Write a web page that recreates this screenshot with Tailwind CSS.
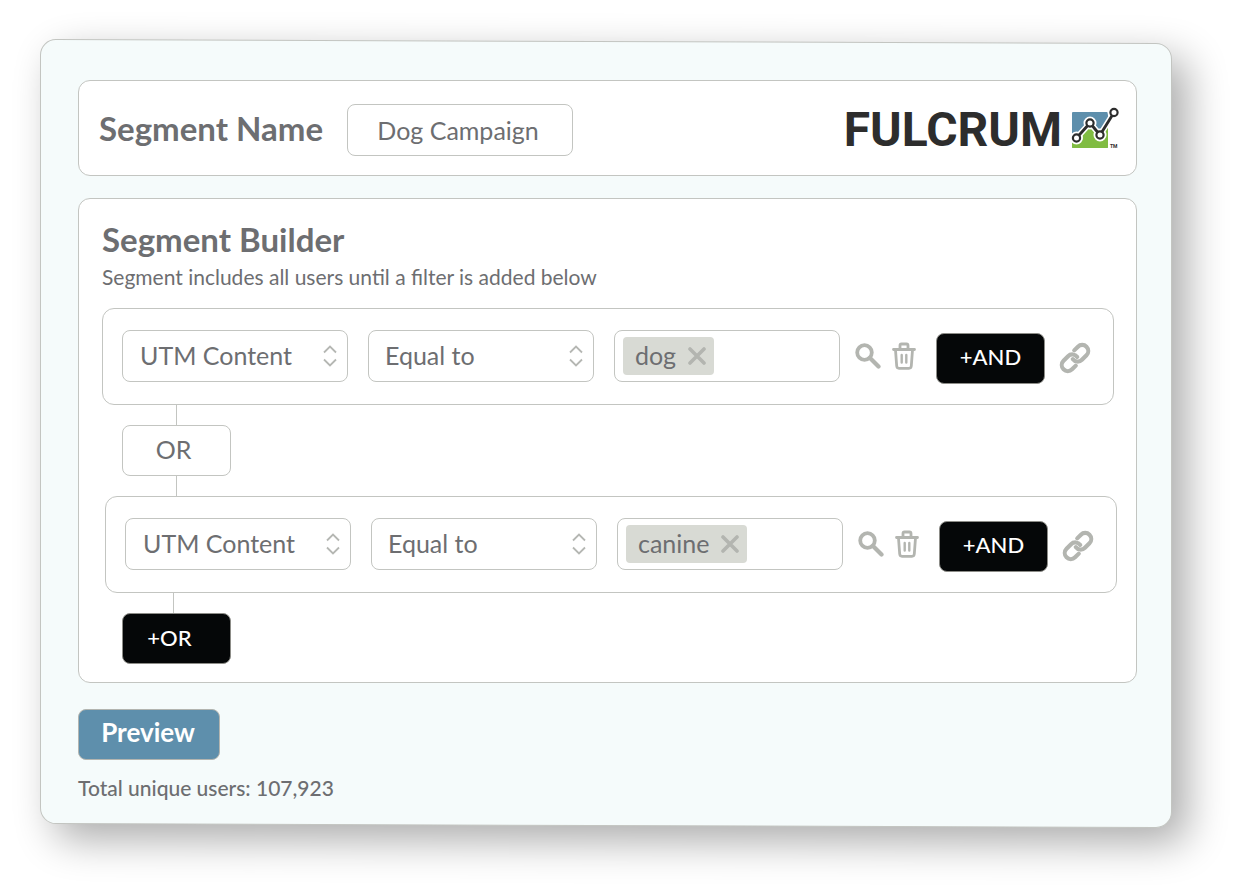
<!DOCTYPE html>
<html lang="en">
<head>
<meta charset="utf-8">
<meta name="viewport" content="width=device-width, initial-scale=1">
<title>Segment Builder</title>
<script src="https://cdn.jsdelivr.net/npm/@tailwindcss/browser@4"></script>
</head>
<body class="flow-root min-h-screen bg-white font-['Lato',sans-serif] text-[#6d6e71]">
<svg class="hidden" aria-hidden="true">
  <symbol id="updown" viewBox="0 0 14 22"><path d="M1 7.500 7 1.500l6 6M1 14.500l6 6 6-6" fill="none" stroke="#b5b7b3" stroke-width="1.800"/></symbol>
  <symbol id="search" viewBox="0 0 26 26"><circle cx="9.500" cy="9.500" r="7.300" fill="none" stroke="#b3b5b0" stroke-width="3.800"/><path d="M15 15l8.500 8.500" stroke="#b3b5b0" stroke-width="4.200" stroke-linecap="round"/></symbol>
  <symbol id="trash" viewBox="0 0 24 28"><g fill="none" stroke="#b3b5b0" stroke-linecap="round" stroke-linejoin="round"><path d="M1.500 7.500h21M8 7V3.500q0-1.500 1.500-1.500h5q1.500 0 1.500 1.500V7" stroke-width="2.800"/><path d="M3.500 8l1.200 16q.2 2.300 2.300 2.300h10q2.100 0 2.300-2.300L20.500 8" stroke-width="2.800"/><path d="M9.700 13v7.500M14.300 13v7.500" stroke-width="2.400"/></g></symbol>
  <symbol id="link" viewBox="0 0 24 24"><g fill="none" stroke="#b3b5b0" stroke-width="3.100" stroke-linecap="round" stroke-linejoin="round"><path d="M10.300 12.800a4.500 4.500 0 0 0 6.900.5l3.400-3.400a4.500 4.500 0 0 0-6.400-6.400L11.400 6.300"/><path d="M13.700 11.200a4.500 4.500 0 0 0-6.900-.5l-3.400 3.400a4.500 4.500 0 0 0 6.400 6.400l2.800-2.800"/></g></symbol>
  <symbol id="cross" viewBox="0 0 18 18"><path d="M2 2l14 14M16 2L2 16" stroke="#b3b5b0" stroke-width="3.600" stroke-linecap="round"/></symbol>
</svg>

<main class="relative mt-[41px] mr-[66px] ml-10 pt-[39px] pr-[35px] pb-[22px] pl-[38px]">
  <div class="absolute inset-0 -z-10 skew-y-[0.2deg] rounded-2xl border border-[#c3c5c1] bg-[#f5fbfb] shadow-[15px_15px_40px_rgba(0,0,0,0.33)]"></div>

  <header class="flex h-24 items-center rounded-xl border border-[#c3c5c1] bg-white pt-1 pr-[17px] pl-5">
    <label for="segment-name" class="pb-1 text-[33px] leading-10 font-bold">Segment Name</label>
    <input id="segment-name" value="Dog Campaign" class="ml-6 h-[52px] w-[226px] rounded-lg border border-[#c3c5c1] bg-white pr-1 text-center text-[25px]">
    <div class="ml-auto flex items-center gap-[9px]" aria-label="Fulcrum">
      <span class="font-['Roboto',sans-serif] text-5xl font-bold text-[#2d2d2d]">FULCRUM</span>
      <svg class="mb-0.5 h-[44px] w-[48px]" viewBox="0 0 48 44">
        <rect x="1" y="5" width="36" height="36" rx="1" fill="#5e8fac"/>
        <path d="M1 31.500L19 17l10 11 8-11v23a1 1 0 0 1-1 1H2a1 1 0 0 1-1-1z" fill="#80bc42"/>
        <g stroke="#fff" stroke-width="6" fill="none"><path d="M5.500 31L19 16l10 12L43 5.500"/><circle cx="5.500" cy="31" r="3.500"/><circle cx="19" cy="16" r="3.500"/><circle cx="29" cy="28" r="3.500"/><circle cx="43" cy="5.500" r="3.500"/></g>
        <g stroke="#2d2d2d" stroke-width="2.200" fill="#fff"><path d="M5.500 31L19 16l10 12L43 5.500" fill="none" stroke-width="2.800"/><circle cx="5.500" cy="31" r="3.600"/><circle cx="19" cy="16" r="3.600"/><circle cx="29" cy="28" r="3.600"/><circle cx="43" cy="5.500" r="3.600"/></g>
        <text x="39" y="41" font-family="Roboto, sans-serif" font-size="5" font-weight="700" fill="#2d2d2d">TM</text>
      </svg>
    </div>
  </header>

  <section class="mt-[22px] rounded-xl border border-[#c3c5c1] bg-white pt-5 pr-[19px] pb-[18px] pl-[23px]">
    <h1 class="text-[33px] leading-10 font-bold">Segment Builder</h1>
    <p class="mt-0.5 text-[21px] leading-8">Segment includes all users until a filter is added below</p>

    <div class="mt-[15px] mr-[3px] flex h-[97px] items-center rounded-xl border border-[#c3c5c1] bg-white pr-[22px] pb-0.5 pl-[19px]">
      <div class="grid flex-1 grid-cols-3 gap-5">
        <div class="relative">
          <select aria-label="Field, first filter" class="h-[52px] w-full appearance-none rounded-lg border border-[#c3c5c1] bg-white pl-[17px] text-[25px]"><option>UTM Content</option></select>
          <svg class="pointer-events-none absolute top-[15px] right-[11px] h-[22px] w-[14px]"><use href="#updown"/></svg>
        </div>
        <div class="relative">
          <select aria-label="Operator, first filter" class="h-[52px] w-full appearance-none rounded-lg border border-[#c3c5c1] bg-white pl-4 text-[25px]"><option>Equal to</option></select>
          <svg class="pointer-events-none absolute top-[15px] right-[11px] h-[22px] w-[14px]"><use href="#updown"/></svg>
        </div>
        <div class="flex h-[52px] items-center rounded-lg border border-[#c3c5c1] bg-white px-2">
          <span class="flex h-[38px] items-center gap-3 rounded bg-[#d8dad4] pr-2 pl-3 text-[25px]">dog<button aria-label="Remove dog"><svg class="h-[18px] w-[18px]"><use href="#cross"/></svg></button></span>
          <input aria-label="Values, first filter" class="w-0 min-w-0 flex-1 text-[25px]">
        </div>
      </div>
      <button aria-label="Search" class="ml-[15px]"><svg class="h-[26px] w-[26px]"><use href="#search"/></svg></button>
      <button aria-label="Delete" class="ml-[11px]"><svg class="h-7 w-6"><use href="#trash"/></svg></button>
      <button class="mt-[6px] ml-5 h-[51px] w-[109px] rounded-lg border border-[#8d8d88] bg-[#050708] pb-1 text-[22px] font-medium text-white">+AND</button>
      <button aria-label="Link" class="mt-1 ml-[14px]"><svg class="h-8 w-8"><use href="#link"/></svg></button>
    </div>

    <div class="ml-[74px] h-5 w-px bg-[#c3c5c1]"></div>
    <button class="ml-5 block h-[51px] w-[109px] rounded-lg border border-[#c3c5c1] bg-white pr-[6px] pb-[2px] text-[25px]">OR</button>
    <div class="ml-[74px] h-5 w-px bg-[#c3c5c1]"></div>

    <div class="ml-[3px] flex h-[97px] items-center rounded-xl border border-[#c3c5c1] bg-white pr-[22px] pb-0.5 pl-[19px]">
      <div class="grid flex-1 grid-cols-3 gap-5">
        <div class="relative">
          <select aria-label="Field, second filter" class="h-[52px] w-full appearance-none rounded-lg border border-[#c3c5c1] bg-white pl-[17px] text-[25px]"><option>UTM Content</option></select>
          <svg class="pointer-events-none absolute top-[15px] right-[11px] h-[22px] w-[14px]"><use href="#updown"/></svg>
        </div>
        <div class="relative">
          <select aria-label="Operator, second filter" class="h-[52px] w-full appearance-none rounded-lg border border-[#c3c5c1] bg-white pl-4 text-[25px]"><option>Equal to</option></select>
          <svg class="pointer-events-none absolute top-[15px] right-[11px] h-[22px] w-[14px]"><use href="#updown"/></svg>
        </div>
        <div class="flex h-[52px] items-center rounded-lg border border-[#c3c5c1] bg-white px-2">
          <span class="flex h-[38px] items-center gap-3 rounded bg-[#d8dad4] pr-2 pl-3 text-[25px]">canine<button aria-label="Remove canine"><svg class="h-[18px] w-[18px]"><use href="#cross"/></svg></button></span>
          <input aria-label="Values, second filter" class="w-0 min-w-0 flex-1 text-[25px]">
        </div>
      </div>
      <button aria-label="Search" class="ml-[15px]"><svg class="h-[26px] w-[26px]"><use href="#search"/></svg></button>
      <button aria-label="Delete" class="ml-[11px]"><svg class="h-7 w-6"><use href="#trash"/></svg></button>
      <button class="mt-[6px] ml-5 h-[51px] w-[109px] rounded-lg border border-[#8d8d88] bg-[#050708] pb-1 text-[22px] font-medium text-white">+AND</button>
      <button aria-label="Link" class="mt-1 ml-[14px]"><svg class="h-8 w-8"><use href="#link"/></svg></button>
    </div>

    <div class="ml-[71px] h-5 w-px bg-[#c3c5c1]"></div>
    <button class="ml-5 block h-[51px] w-[109px] rounded-lg border border-[#8d8d88] bg-[#050708] pr-[14px] pb-[2px] text-[22px] font-medium text-white">+OR</button>
  </section>

  <button class="mt-[26px] block h-[51px] w-[142px] rounded-lg border border-[#b3b5b0] bg-[#5e8fac] pr-[2px] pb-1 text-[26px] font-bold text-white">Preview</button>
  <p class="mt-3 text-[21px] leading-8 font-medium">Total unique users: 107,923</p>
</main>
</body>
</html>
